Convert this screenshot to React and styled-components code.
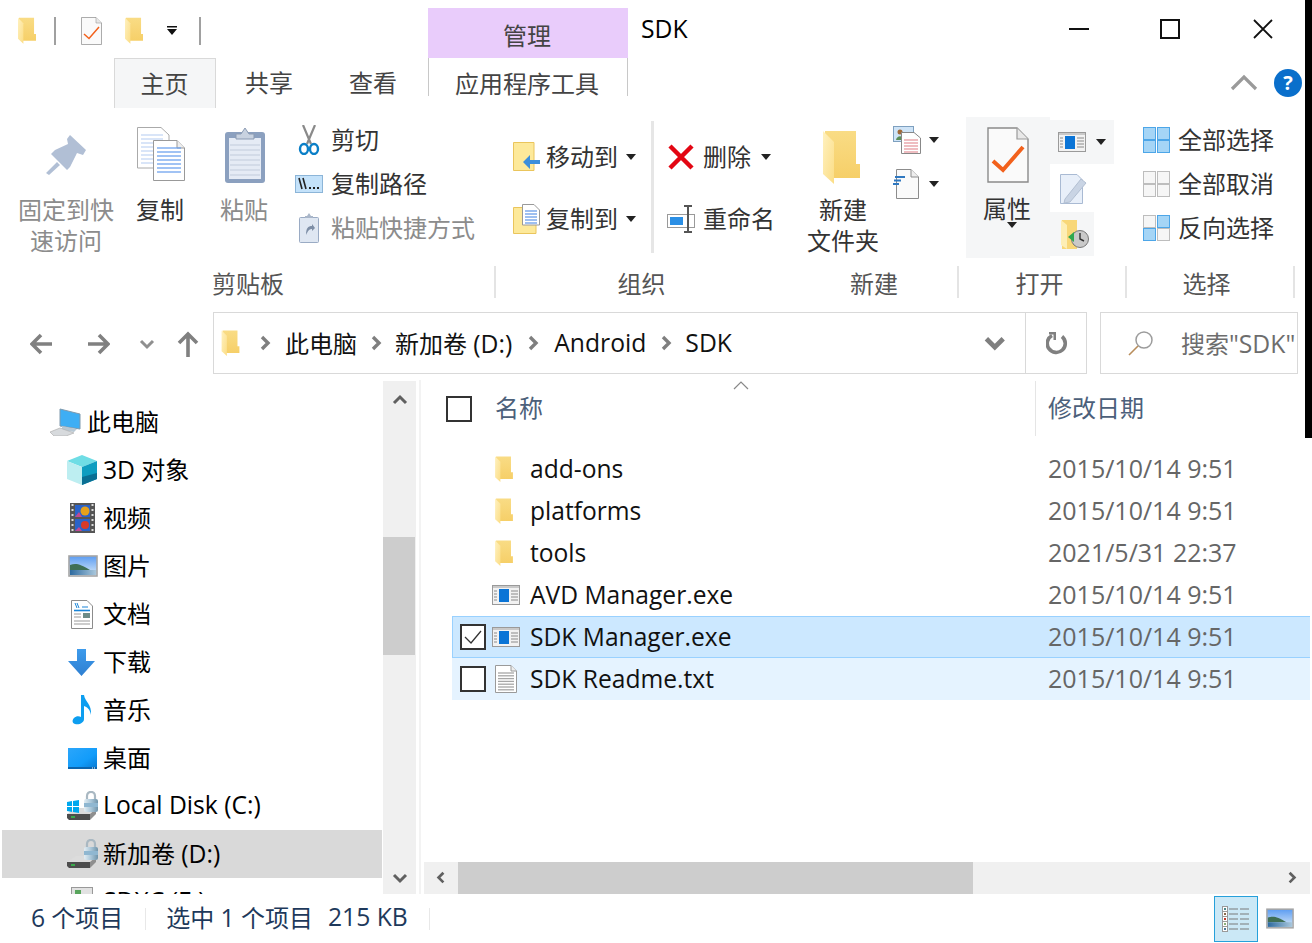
import React from "react";
import styled, { createGlobalStyle, css } from "styled-components";

const Global = createGlobalStyle`
  html, body { margin: 0; padding: 0; background: #fff; }
  body { font-family: "Open Sans", "Noto Sans CJK SC", sans-serif; font-size: 24px; color: #111; }
  * { box-sizing: border-box; }
  svg { display: block; flex: none; }
`;

/* text helpers */
const L = styled.span`font-size: 24.7px;`;
const Label = styled.span`margin-bottom: ${p => p.$lift ?? 4}px;`;

/* ---------- window frame ---------- */
const Window = styled.div`
  position: relative; width: 1312px; height: 943px; overflow: hidden; background: #fff;
  display: flex; flex-direction: column;
`;
const EdgeStrip = styled.div`
  position: absolute; top: 0; right: 0; width: 7px; height: 438px; background: #000;
`;
const TitleBar = styled.div`display: flex; height: 58px;`;
const Qat = styled.div`
  width: 428px; display: flex; align-items: center; padding: 3px 0 0 18px;
`;
const QatSep = styled.div`width: 2px; height: 28px; background: #a0a0a0; margin-left: ${p => p.$ml}px;`;
const QatSlot = styled.div`margin-left: ${p => p.$ml}px;`;
const ContextHead = styled.div`
  width: 200px; margin-top: 8px; background: #e9ccfb; color: #444;
  display: flex; align-items: center; justify-content: center; padding: 2px 2px 0 0;
`;
const Title = styled.div`padding: 0 0 0 13px; line-height: 57px; color: #000;`;
const WinControls = styled.div`margin-left: auto; display: flex; padding-right: 2px;`;
const WinButton = styled.div`width: ${p => p.$w}px; display: flex; align-items: center; justify-content: center;`;

/* ---------- tabs ---------- */
const TabRow = styled.div`display: flex; height: 50px; align-items: flex-start;`;
const Tab = styled.div`
  width: ${p => p.$w}px; margin-left: ${p => p.$ml || 0}px; height: ${p => p.$h || 50}px;
  line-height: ${p => p.$lh || 50}px; text-align: center; color: #444;
  ${p => p.$active && css`
    background: #f5f6f7; border: 1px solid #d9d9d9; border-bottom: none; line-height: 49px; padding-right: 1px;
  `}
  ${p => p.$ctx && css`border-left: 1px solid #c8c8c8; border-right: 1px solid #c8c8c8; padding-right: 2px;`}
`;
const TabRight = styled.div`
  margin-left: auto; display: flex; align-items: center; height: 50px; gap: 16px; padding-right: 10px;
`;
const Help = styled.div`
  width: 28px; height: 28px; border-radius: 50%; background: #0a6fcb; color: #fff;
  font-size: 20px; font-weight: 700; line-height: 28px; text-align: center;
`;

/* ---------- ribbon ---------- */
const Ribbon = styled.div`display: flex; height: 204px;`;
const Group = styled.div`
  width: ${p => p.$w}px; flex: none; display: flex; flex-direction: column;
`;
const GroupBody = styled.div`height: 148px; margin-top: 10px; display: flex; padding-left: ${p => p.$pl || 0}px;`;
const GroupLabelRow = styled.div`
  height: 32px; display: flex; align-items: center; justify-content: center; color: #555;
  padding: 0 ${p => p.$pr || 0}px 0 ${p => p.$pl || 0}px;
  border-right: ${p => (p.$sep ? "2px solid #e4e4e4" : "none")};
`;
const BigButton = styled.div`
  width: ${p => p.$w}px; margin-left: ${p => p.$ml || 0}px; flex: none; display: flex; flex-direction: column;
  align-items: center; color: ${p => (p.$off ? "#8c8c8c" : "#333")}; line-height: 31px; text-align: center;
`;
const BigIcon = styled.div`
  height: 76px; padding-top: ${p => p.$pt}px; margin-right: ${p => p.$mr || 0}px; margin-left: ${p => p.$ml || 0}px;
`;
const BigArrow = styled.div`margin: -2px 0 0 8px;`;
const SmallColumn = styled.div`
  display: flex; flex-direction: column; margin-left: ${p => p.$ml || 0}px; width: ${p => (p.$w ? p.$w + "px" : "auto")};
  padding-top: ${p => p.$pt || 0}px;
`;
const SmallRow = styled.div`
  height: ${p => p.$h || 44}px; display: flex; align-items: center; white-space: nowrap;
  color: ${p => (p.$off ? "#8c8c8c" : "#333")};
`;
const SmallIconSlot = styled.div`
  width: ${p => p.$w}px; flex: none; display: flex; padding-left: ${p => p.$pl || 0}px; margin-left: ${p => p.$ml || 0}px;
`;
const DropArrow = styled.div`
  margin-left: ${p => p.$ml}px; width: 0; height: 0;
  border-left: 5px solid transparent; border-right: 5px solid transparent; border-top: 6px solid #222;
`;
const RibbonSep = styled.div`width: 3px; height: 132px; margin-top: 3px; background: #e6e6e6; flex: none;`;
const OpenPanel = styled.div`
  width: 84px; height: 141px; margin: -1px 0 0 7px; background: #f5f6f7; display: flex; flex-direction: column;
  align-items: center; color: #333; line-height: 31px; flex: none;
`;
const OpenLabel = styled.span`margin-right: 2px;`;
const OpenRow = styled.div`
  width: ${p => p.$w}px; height: ${p => p.$h}px; margin-top: ${p => p.$mt || 0}px;
  background: ${p => (p.$bg ? "#f5f6f7" : "transparent")}; display: flex; align-items: center; padding-left: ${p => p.$pl}px;
`;

/* ---------- navigation bar ---------- */
const NavBar = styled.div`display: flex; height: 62px; align-items: stretch;`;
const NavButtons = styled.div`width: 213px; flex: none; display: flex; align-items: center; padding: 2px 0 0 30px;`;
const NavSlot = styled.div`margin-left: ${p => p.$ml || 0}px;`;
const Address = styled.div`
  width: 874px; border: 1px solid #d9d9d9; display: flex; align-items: center; padding-left: 7px; flex: none;
`;
const CrumbSep = styled.div`width: ${p => p.$w}px; flex: none; display: flex; justify-content: center; padding-left: ${p => p.$pl || 0}px;`;
const CrumbText = styled.span`color: #111; white-space: nowrap; margin-bottom: 2px;`;
const AddressEnd = styled.div`margin-left: auto; display: flex; height: 100%; align-items: center;`;
const AddressDrop = styled.div`width: 60px; display: flex; justify-content: center;`;
const Refresh = styled.div`
  width: 61px; height: 100%; border-left: 1px solid #d9d9d9; display: flex; align-items: center; justify-content: center; padding-left: 1px;
`;
const Search = styled.div`
  width: 198px; margin-left: 13px; border: 1px solid #d9d9d9; display: flex; align-items: center;
  padding-left: 27px; color: #6d6d6d; white-space: nowrap; overflow: hidden; flex: none;
`;
const SearchText = styled.span`margin: 0 0 2px 27px;`;

/* ---------- body ---------- */
const Content = styled.div`display: flex; height: 520px;`;
const NavPane = styled.div`display: flex; width: 424px; flex: none; padding-top: 6px;`;
const Tree = styled.div`
  width: 383px; height: 514px; padding: 18px 1px 0 2px; overflow: hidden; flex: none;
`;
const TreeRow = styled.div`
  height: 48px; display: flex; align-items: center; white-space: nowrap; color: #000;
  padding-left: ${p => p.$pl}px; background: ${p => (p.$sel ? "#d9d9d9" : "transparent")};
`;
const TreeIcon = styled.div`width: ${p => p.$w || 36}px; flex: none; display: flex;`;
const VScroll = styled.div`
  width: 33px; height: 513px; margin-top: 1px; background: #f0f0f0; display: flex; flex-direction: column; flex: none;
`;
const ScrollArrow = styled.div`
  height: ${p => p.$h || 38}px; width: ${p => p.$w || "auto"}; display: flex; align-items: center; justify-content: center; flex: none;
`;
const VGap = styled.div`height: 118px; flex: none;`;
const VThumb = styled.div`height: 118px; width: 32px; background: #cdcdcd; flex: none;`;
const Flex1 = styled.div`flex: 1;`;
const PaneDivider = styled.div`width: 2px; height: 514px; margin-left: 3px; background: #f3f3f3; flex: none;`;

const ListPane = styled.div`flex: 1; display: flex; flex-direction: column; position: relative;`;
const ListHeader = styled.div`height: 62px; display: flex; flex: none; padding: 7px 0 0 0; position: relative;`;
const HeaderCheckSlot = styled.div`margin: 15px 0 0 22px; flex: none;`;
const HeaderName = styled.div`
  width: 541px; margin-left: 23px; height: 55px; line-height: 54px; color: #4c607a; border-right: 1px solid #e5e5e5; flex: none;
`;
const HeaderDate = styled.div`margin-left: 12px; line-height: 54px; color: #4c607a;`;
const SortCaret = styled.div`position: absolute; left: 309px; top: 7px;`;
const Rows = styled.div`flex: 1; padding: 12px 2px 0 28px; overflow: hidden;`;
const Row = styled.div`
  height: 42px; display: grid; grid-template-columns: 40px 38px 518px 1fr; align-items: center; white-space: nowrap;
  ${p => p.$sel && css`
    background: #cce8ff;
    box-shadow: inset 1px 0 0 #99d1ff, inset 0 1px 0 #99d1ff, inset 0 -1px 0 #99d1ff;
  `}
  ${p => p.$hot && css`background: #e5f3ff;`}
`;
const RowCheck = styled.div`padding-left: 8px;`;
const CheckBox = styled.div`
  width: 26px; height: 26px; border: 2px solid #333; background: #fff;
  display: flex; align-items: center; justify-content: center;
`;
const RowIcon = styled.div`display: flex; padding-left: ${p => p.$pl || 0}px;`;
const RowName = styled.div`color: #111; font-size: 24.6px; margin-bottom: 2px;`;
const RowDate = styled.div`color: #666; font-size: 25px; margin-bottom: 2px;`;
const HScroll = styled.div`
  height: 32px; margin-right: 2px; background: #f0f0f0; display: flex; flex: none;
`;
const HThumb = styled.div`width: 515px; background: #cdcdcd; flex: none;`;

/* ---------- status bar ---------- */
const StatusBar = styled.div`
  height: 49px; display: flex; align-items: center; padding-left: 31px; color: #1e395b; white-space: nowrap;
`;
const StatusSep = styled.div`width: 1px; height: 22px; background: #e8e8e8; margin: 0 ${p => p.$r}px 0 ${p => p.$l}px;`;
const StatusGap = styled(Label)`margin-left: 15px;`;
const ViewButtons = styled.div`margin-left: auto; display: flex; align-items: center; padding-right: 18px; height: 100%;`;
const ViewActive = styled.div`
  width: 44px; height: 46px; border: 1px solid #26a0da; background: #cbe8f6; display: flex; align-items: center; justify-content: center;
`;
const ViewOther = styled.div`margin-left: 8px;`;

/* ---------- icons ---------- */
const Folder = ({ w = 18, h = 26 }) => (
  <svg width={w} height={h} viewBox="0 0 37 54">
    <defs>
      <linearGradient id="fBack" x1="0" y1="0" x2="0" y2="1">
        <stop offset="0" stopColor="#f9dc85" /><stop offset="1" stopColor="#f6cf68" />
      </linearGradient>
      <linearGradient id="fFront" x1="0" y1="0" x2="1" y2="1">
        <stop offset="0" stopColor="#fff1bf" /><stop offset="1" stopColor="#fbdd86" />
      </linearGradient>
    </defs>
    <path d="M2 1 H33 V34 H37 V48 H10 L2 40 Z" fill="url(#fBack)" />
    <path d="M0 1 L11 12 V54 L0 44 Z" fill="url(#fFront)" />
  </svg>
);
const CheckDoc = ({ w = 42, h = 56, sw = 4 }) => (
  <svg width={w} height={h} viewBox="0 0 42 56">
    <path d="M1 1 H30 L41 12 V55 H1 Z" fill="#fafafa" stroke="#8a8a8a" strokeWidth="1.4" />
    <path d="M30 1 V12 H41" fill="#e8e8e8" stroke="#9a9a9a" strokeWidth="1.2" />
    <path d="M6 34 L16 43 L36 20" fill="none" stroke="#f2611c" strokeWidth={sw} />
  </svg>
);
const Pin = () => (
  <svg width="40" height="40" viewBox="0 0 40 40">
    <path d="M24 0 L40 15 L37 20 L31 18 L24 32 L21 35 L5 19 L9 15 L22 9 L21 4 Z M11 27 L14 30 L3 40 L0 38 Z" fill="#b1bfd5" />
  </svg>
);
const DocLines = ({ x, y, w, n, c, step = 4 }) => (
  <g stroke={c} strokeWidth="1.3">
    {Array.from({ length: n }, (_, i) => <line key={i} x1={x} x2={x + w} y1={y + i * step} y2={y + i * step} />)}
  </g>
);
const CopyIcon = () => (
  <svg width="48" height="54" viewBox="0 0 48 54">
    <path d="M.5.5 H24 L32 8 V41 H.5 Z" fill="#fff" stroke="#aaa" />
    <DocLines x={4} y={8} w={22} n={8} c="#c5d7f5" />
    <path d="M16.5 13.5 H40 L47.5 21 V53.5 H16.5 Z" fill="#fff" stroke="#999" />
    <path d="M40 13.5 V21 H47.5" fill="#eee" stroke="#999" />
    <DocLines x={20} y={21} w={24} n={7} c="#6fa3ee" />
  </svg>
);
const PasteIcon = () => (
  <svg width="40" height="56" viewBox="0 0 40 56">
    <rect x="0" y="5" width="40" height="51" rx="3" fill="#8ba0bf" />
    <rect x="4" y="11" width="32" height="41" fill="#e5ebf5" />
    <DocLines x={5} y={18} w={30} n={7} c="#c9d2e0" step={5} />
    <path d="M11 12 V7 H16 L20 1 L24 7 H29 V12 Z" fill="#c8d2e0" stroke="#8b9bb3" />
  </svg>
);
const Scissors = () => (
  <svg width="22" height="30" viewBox="0 0 22 30">
    <path d="M5 0 L13 19 M17 0 L9 19" stroke="#8a8a8a" strokeWidth="2.2" fill="none" />
    <ellipse cx="6" cy="24" rx="4" ry="5" fill="none" stroke="#0b7fc7" strokeWidth="2.4" />
    <ellipse cx="16" cy="24" rx="4" ry="5" fill="none" stroke="#0b7fc7" strokeWidth="2.4" />
  </svg>
);
const PathIcon = () => (
  <svg width="28" height="18" viewBox="0 0 28 18">
    <rect x=".5" y=".5" width="27" height="17" fill="#c4e2fa" stroke="#8cb5d8" />
    <path d="M4 3 L7 14 M8 3 L11 14" stroke="#222" strokeWidth="1.6" />
    <path d="M14 13 h2 M18 13 h2 M22 13 h2" stroke="#222" strokeWidth="1.8" />
  </svg>
);
const ShortcutIcon = () => (
  <svg width="20" height="30" viewBox="0 0 20 30">
    <rect x=".5" y="4.5" width="19" height="25" rx="1" fill="#dfe7f2" stroke="#9aabc4" />
    <path d="M6 5 V3 H8 L10 0 L12 3 H14 V5 Z" fill="#a9b6c9" />
    <path d="M7 22 C7 15 9 13 13 13 V11 L16 15 L13 18 V16 C10 16 9 18 7 22 Z" fill="#7d8ea6" />
  </svg>
);
const MoveIcon = () => (
  <svg width="28" height="30" viewBox="0 0 28 30">
    <path d="M.5.5 H21 V28.5 H.5 Z" fill="#fde99a" stroke="#eac55c" />
    <path d="M27 18 H17 V13 L10 20 L17 27 V22 H27 Z" fill="#3d8fdc" />
  </svg>
);
const CopyToIcon = () => (
  <svg width="28" height="30" viewBox="0 0 28 30">
    <path d="M.5 3.5 H23 V29.5 H.5 Z" fill="#fde99a" stroke="#eac55c" />
    <path d="M9.5 .5 H21 L26.5 6 V21 H9.5 Z" fill="#fff" stroke="#999" />
    <DocLines x={12} y={7} w={12} n={5} c="#6a9ce8" step={3} />
  </svg>
);
const DeleteIcon = () => (
  <svg width="26" height="26" viewBox="0 0 26 26">
    <path d="M2 2 L24 24 M24 2 L2 24" stroke="#e30613" strokeWidth="4.5" />
  </svg>
);
const RenameIcon = () => (
  <svg width="28" height="28" viewBox="0 0 28 28">
    <rect x=".5" y="9.5" width="27" height="13" fill="#fff" stroke="#9a9a9a" />
    <rect x="3" y="12" width="13" height="8" fill="#2b8fe5" />
    <path d="M17 1 H25 M17 27 H25 M21 1 V27" stroke="#555" strokeWidth="2" />
  </svg>
);
const NewItemIcon = () => (
  <svg width="28" height="28" viewBox="0 0 28 28">
    <rect x=".5" y=".5" width="20" height="15" fill="#cfe4f7" stroke="#7ea0bf" />
    <circle cx="7" cy="6" r="2.5" fill="#a06a3a" />
    <path d="M3 14 C4 9 10 9 11 14" fill="#5b8f58" />
    <path d="M8.5 6.5 H21 L27.5 12 V27.5 H8.5 Z" fill="#fff" stroke="#888" />
    <DocLines x={11} y={14} w={14} n={5} c="#e79aa0" step={3} />
  </svg>
);
const EasyIcon = () => (
  <svg width="26" height="30" viewBox="0 0 26 30">
    <path d="M3.5 .5 H18 L25.5 8 V29.5 H3.5 Z" fill="#fafafa" stroke="#8c8c8c" />
    <path d="M18 .5 V8 H25.5" fill="#eee" stroke="#8c8c8c" />
    <path d="M2 8 h10 M1 11.5 h7 M0 15 h6" stroke="#2f78c0" strokeWidth="2" />
  </svg>
);
const AppWindow = ({ w = 28, h = 20 }) => (
  <svg width={w} height={h} viewBox="0 0 28 20">
    <rect x=".5" y=".5" width="27" height="19" fill="#f2f2f2" stroke="#9a9a9a" />
    <rect x="1" y="1" width="26" height="2" fill="#c9c9c9" />
    <rect x="7" y="4" width="10" height="13" fill="#0a74d6" />
    <path d="M2 6 h3 M2 9 h3 M2 12 h3 M2 15 h3 M19 6 h7 M19 9 h7 M19 12 h7 M19 15 h7" stroke="#8a8a8a" />
  </svg>
);
const EditIcon = () => (
  <svg width="28" height="30" viewBox="0 0 28 30">
    <path d="M.5 .5 H17 L22.5 6 V29.5 H.5 Z" fill="#e8eff9" stroke="#a9bad3" />
    <path d="M5 25 L21 5 L26 9 L10 28 L4 29 Z" fill="#c9d4e4" stroke="#b2bfd2" />
  </svg>
);
const HistoryIcon = () => (
  <svg width="28" height="30" viewBox="0 0 28 30">
    <path d="M1 1 H16 V30 H1 Z" fill="#f8d778" />
    <path d="M0 1 L6 6 V30 L0 26 Z" fill="#fdeeb5" />
    <circle cx="19" cy="20" r="8.5" fill="#c9c9c9" stroke="#777" />
    <path d="M19 14 V20 L23 22" stroke="#333" fill="none" strokeWidth="1.4" />
    <path d="M7 18 L13 13 V23 Z" fill="#2fa84f" />
  </svg>
);
const SelectGrid = ({ on = [0, 1, 2, 3] }) => (
  <svg width="27" height="26" viewBox="0 0 27 26">
    {[[0, 0], [14, 0], [0, 13], [14, 13]].map(([x, y], i) => (
      <rect key={i} x={x + .5} y={y + .5} width="12" height="12"
        fill={on.includes(i) ? "#a5d5f6" : "#f6f6f6"} stroke={on.includes(i) ? "#4da6e8" : "#bdbdbd"} />
    ))}
  </svg>
);
const ChevronSvg = styled.svg`overflow: visible;`;
const Chevron = ({ dir = "right", s = 10, c = "#7f7f7f", sw = 3 }) => {
  const d = { right: "M2 1 L8 7 L2 13", left: "M8 1 L2 7 L8 13", up: "M1 8 L7 2 L13 8", down: "M1 2 L7 8 L13 2" }[dir];
  const side = dir === "right" || dir === "left";
  return (
    <ChevronSvg width={side ? s : s * 1.4} height={side ? s * 1.4 : s} viewBox={side ? "0 0 10 14" : "0 0 14 10"}>
      <path d={d} fill="none" stroke={c} strokeWidth={sw} />
    </ChevronSvg>
  );
};
const Arrow = ({ dir }) => {
  const d = {
    left: "M22 11 H3 M11 2 L2 11 L11 20",
    right: "M0 11 H19 M11 2 L20 11 L11 20",
    up: "M11 26 V3 M2 12 L11 3 L20 12",
  }[dir];
  return (
    <svg width="22" height={dir === "up" ? 26 : 22} viewBox={dir === "up" ? "0 0 22 26" : "0 0 22 22"}>
      <path d={d} fill="none" stroke="#808080" strokeWidth="3.6" />
    </svg>
  );
};
const RefreshIcon = () => (
  <svg width="22" height="24" viewBox="0 0 22 24">
    <path d="M6 4.5 A9 9 0 1 0 16 5.5" fill="none" stroke="#808080" strokeWidth="3.6" />
    <path d="M3 1 L10 1 L10 9 L7.5 9 L7.5 3.5 L3 3.5 Z" fill="#808080" />
  </svg>
);
const Magnifier = () => (
  <svg width="26" height="26" viewBox="0 0 26 26">
    <circle cx="16" cy="10" r="8" fill="none" stroke="#9c9c9c" strokeWidth="1.5" />
    <path d="M10 16 L1 25" stroke="#b98d5b" strokeWidth="1.6" />
  </svg>
);
const PcIcon = () => (
  <svg width="31" height="28" viewBox="0 0 31 28">
    <path d="M10 1 L30 6 V21 L10 18 Z" fill="#3eaef4" stroke="#7e99ad" />
    <path d="M12 18 L27 21 L24 24 L12 22 Z" fill="#b7c7d3" />
    <path d="M0 24 L10 20 L24 25 L16 28 H4 Z" fill="#d7dadd" stroke="#b0b0b0" strokeWidth=".7" />
  </svg>
);
const CubeIcon = () => (
  <svg width="30" height="30" viewBox="0 0 30 30">
    <path d="M15 0 L30 6 L15 12 L0 6 Z" fill="#6fdde5" />
    <path d="M0 6 L15 12 V30 L0 24 Z" fill="#bdeef1" />
    <path d="M15 12 L30 6 V24 L15 30 Z" fill="#0e9dc0" />
    <path d="M15 22 L30 18 V24 L15 30 Z" fill="#0a6f93" />
  </svg>
);
const VideoIcon = () => (
  <svg width="25" height="30" viewBox="0 0 25 30">
    <rect width="25" height="30" fill="#555" />
    <path d="M1.5 2 h2 M1.5 7 h2 M1.5 12 h2 M1.5 17 h2 M1.5 22 h2 M1.5 27 h2 M21.5 2 h2 M21.5 7 h2 M21.5 12 h2 M21.5 17 h2 M21.5 22 h2 M21.5 27 h2" stroke="#ddd" strokeWidth="2" />
    <rect x="5" y="2" width="15" height="12" fill="#2a63c9" />
    <rect x="5" y="16" width="15" height="12" fill="#2a63c9" />
    <circle cx="15" cy="8" r="4.5" fill="#e6a11b" />
    <circle cx="15" cy="22" r="4" fill="#d83a2a" />
    <path d="M5 14 L9 9 L12 14 Z M5 28 L9 24 L12 28 Z" fill="#c04a94" />
  </svg>
);
const PictureIcon = ({ w = 30, h = 22 }) => (
  <svg width={w} height={h} viewBox="0 0 30 22">
    <defs>
      <linearGradient id="sky" x1="0" y1="0" x2="0" y2="1">
        <stop offset="0" stopColor="#5b9cf2" /><stop offset="1" stopColor="#dcebf7" />
      </linearGradient>
      <linearGradient id="sea" x1="0" y1="0" x2="1" y2="0">
        <stop offset="0" stopColor="#2d6a9f" /><stop offset="1" stopColor="#a9c7dc" />
      </linearGradient>
    </defs>
    <rect x="1" y="1" width="28" height="20" fill="url(#sky)" stroke="#a5a5a5" strokeWidth="1.6" />
    <path d="M2 10 C8 8 12 9 22 15 L2 15 Z" fill="#3f6f55" />
    <rect x="2" y="15" width="26" height="5" fill="url(#sea)" />
  </svg>
);
const DocIcon = () => (
  <svg width="22" height="29" viewBox="0 0 22 29">
    <path d="M.5 .5 H16 L21.5 6 V28.5 H.5 Z" fill="#fff" stroke="#8c8c8c" />
    <path d="M3 10.5 h16" stroke="#1a85d8" strokeWidth="1.6" />
    <path d="M4 3 L6 8 M6 3 L8 8 M11 7 h6" stroke="#1a85d8" />
    <rect x="12" y="13" width="7" height="5" fill="#6d8c88" />
    <path d="M3 14 h7 M3 17 h7 M3 21 h16 M3 24 h16" stroke="#999" />
  </svg>
);
const DownloadIcon = () => (
  <svg width="27" height="27" viewBox="0 0 27 27">
    <defs><linearGradient id="dl" x1="0" y1="0" x2="0" y2="1"><stop offset="0" stopColor="#3d9bec" /><stop offset="1" stopColor="#2e7fd1" /></linearGradient></defs>
    <path d="M9 0 H18 V12 H27 L13.5 27 L0 12 H9 Z" fill="url(#dl)" />
  </svg>
);
const MusicIcon = () => (
  <svg width="20" height="30" viewBox="0 0 20 30">
    <path d="M9 0 H12 C13 7 20 9 19 20 C18 14 15 12 12 11 V24 C12 28 7 30 3 29 C0 28 0 25 2 23 C4 21 7 21 9 22 Z" fill="#0d9ef0" />
  </svg>
);
const DesktopIcon = () => (
  <svg width="29" height="21" viewBox="0 0 29 21">
    <defs><linearGradient id="dt" x1="0" y1="0" x2="1" y2="1"><stop offset="0" stopColor="#2ba6fb" /><stop offset=".6" stopColor="#129cfa" /><stop offset="1" stopColor="#0878d0" /></linearGradient></defs>
    <rect width="29" height="21" fill="url(#dt)" />
    <rect y="19" width="29" height="2" fill="#0b64ad" />
    <path d="M24 20 h4" stroke="#fff" strokeDasharray="1 1" />
  </svg>
);
const DiskIcon = ({ win }) => (
  <svg width="31" height="30" viewBox="0 0 31 30">
    <defs>
      <linearGradient id="lk" x1="0" y1="0" x2="1" y2="0">
        <stop offset="0" stopColor="#e3edf3" /><stop offset=".5" stopColor="#a9c6d8" /><stop offset="1" stopColor="#6f93a9" />
      </linearGradient>
    </defs>
    <path d="M0 23 L9 17 H29 V22 L23 28 H2 Z" fill="#dcdcdc" />
    <path d="M0 23 H23 V29 H2 L0 27 Z" fill="#4d4d4d" />
    <path d="M23 23 L29 18 V23 L23 29 Z" fill="#8f8f8f" />
    <path d="M4 26 h4" stroke="#36c24d" strokeWidth="1.6" />
    <path d="M20 9 V5 C20 -.5 28 -.5 28 5 V9" fill="none" stroke="#a9b8c2" strokeWidth="2.2" />
    <rect x="17" y="8" width="14" height="13" rx="2" fill="url(#lk)" />
    <rect x="17" y="12" width="14" height="4" fill="#8fb7d1" />
    {win && <path d="M0 11 L5 10 V15 H0 Z M6 10 L12 9 V15 H6 Z M0 16 H5 V21 L0 20 Z M6 16 H12 V22 L6 21 Z" fill="#00a8ee" />}
  </svg>
);
const SdIcon = () => (
  <svg width="22" height="30" viewBox="0 0 22 30">
    <rect x=".5" y=".5" width="21" height="29" fill="#e2e2e2" stroke="#999" />
    <rect x="4" y="3" width="6" height="4" fill="#58a55c" />
  </svg>
);
const TxtIcon = () => (
  <svg width="22" height="28" viewBox="0 0 22 28">
    <path d="M.5 .5 H16 L21.5 6 V27.5 H.5 Z" fill="#fff" stroke="#9a9a9a" />
    <path d="M16 .5 V6 H21.5" fill="#eee" stroke="#9a9a9a" />
    <DocLines x={3} y={8} w={16} n={7} c="#a6a6a6" step={2.8} />
  </svg>
);
const DetailsIcon = () => (
  <svg width="28" height="26" viewBox="0 0 28 26">
    <rect x=".5" y=".5" width="5" height="25" fill="#fff" stroke="#9a9a9a" />
    <path d="M1 5.5 h5 M1 10.5 h5 M1 15.5 h5 M1 20.5 h5" stroke="#9a9a9a" />
    <rect x="2" y="2" width="2" height="2" fill="#4b8a8c" /><rect x="2" y="7" width="2" height="2" fill="#8a6a4b" />
    <rect x="2" y="12" width="2" height="2" fill="#c0392b" /><rect x="2" y="17" width="2" height="2" fill="#8ab07a" />
    <rect x="2" y="22" width="2" height="2" fill="#4b7a9c" />
    <path d="M7 3 h9 M18 3 h9 M7 8 h9 M18 8 h9 M7 13 h9 M18 13 h9 M7 18 h9 M18 18 h9 M7 23 h9 M18 23 h9" stroke="#7a7a7a" strokeWidth="1.2" />
  </svg>
);

const tree = [
  { id: "pc", t: "此电脑", pl: 48, icon: <PcIcon />, w: 37 },
  { id: "3d", t: <><L>3D</L> 对象</>, pl: 65, icon: <CubeIcon /> },
  { id: "v", t: "视频", pl: 68, icon: <VideoIcon />, w: 33 },
  { id: "p", t: "图片", pl: 66, icon: <PictureIcon />, w: 35 },
  { id: "d", t: "文档", pl: 69, icon: <DocIcon />, w: 32 },
  { id: "dl", t: "下载", pl: 66, icon: <DownloadIcon />, w: 35 },
  { id: "m", t: "音乐", pl: 70, icon: <MusicIcon />, w: 31 },
  { id: "ds", t: "桌面", pl: 66, icon: <DesktopIcon />, w: 35 },
  { id: "c", t: <L>Local Disk (C:)</L>, pl: 65, icon: <DiskIcon win /> },
  { id: "dd", t: <>新加卷 <L>(D:)</L></>, pl: 65, icon: <DiskIcon />, sel: true },
  { id: "e", t: <L>SDXC (E:)</L>, pl: 69, icon: <SdIcon />, w: 32 },
];
const files = [
  { n: "add-ons", d: "2015/10/14 9:51", k: "f" },
  { n: "platforms", d: "2015/10/14 9:51", k: "f" },
  { n: "tools", d: "2021/5/31 22:37", k: "f" },
  { n: "AVD Manager.exe", d: "2015/10/14 9:51", k: "e" },
  { n: "SDK Manager.exe", d: "2015/10/14 9:51", k: "e", sel: true },
  { n: "SDK Readme.txt", d: "2015/10/14 9:51", k: "t", hot: true },
];
const fileIcon = { f: <RowIcon $pl={3}><Folder /></RowIcon>, e: <RowIcon><AppWindow /></RowIcon>, t: <RowIcon $pl={3}><TxtIcon /></RowIcon> };

export default function App() {
  return (
    <Window>
      <Global />
      <TitleBar>
        <Qat>
          <Folder w={18} h={27} />
          <QatSep $ml={18} />
          <QatSlot $ml={25}><CheckDoc w={21} h={28} sw={3} /></QatSlot>
          <QatSlot $ml={23}><Folder w={18} h={27} /></QatSlot>
          <QatSlot $ml={24}>
            <svg width="10" height="9" viewBox="0 0 10 9"><path d="M0 0 h10 v1.5 h-10 Z M0 3 h10 L5 9 Z" fill="#111" /></svg>
          </QatSlot>
          <QatSep $ml={22} />
        </Qat>
        <ContextHead>管理</ContextHead>
        <Title><L>SDK</L></Title>
        <WinControls>
          <WinButton $w={92}><svg width="20" height="2"><rect width="20" height="2" fill="#111" /></svg></WinButton>
          <WinButton $w={90}><svg width="20" height="20"><rect x="1" y="1" width="18" height="18" fill="none" stroke="#111" strokeWidth="2" /></svg></WinButton>
          <WinButton $w={95}><svg width="20" height="20" viewBox="0 0 20 20"><path d="M1 1 L19 19 M19 1 L1 19" stroke="#111" strokeWidth="1.8" /></svg></WinButton>
        </WinControls>
      </TitleBar>

      <TabRow>
        <Tab $w={102} $ml={114} $active>主页</Tab>
        <Tab $w={106}>共享</Tab>
        <Tab $w={102}>查看</Tab>
        <Tab $w={200} $ml={4} $h={38} $lh={52} $ctx>应用程序工具</Tab>
        <TabRight>
          <Chevron dir="up" s={20} c="#9a9a9a" sw={1.6} />
          <Help>?</Help>
        </TabRight>
      </TabRow>

      <Ribbon>
        <Group $w={496}>
          <GroupBody $pl={18}>
            <BigButton $w={96} $off><BigIcon $pt={17}><Pin /></BigIcon>固定到快<br />速访问</BigButton>
            <BigButton $w={92}><BigIcon $pt={9} $ml={2}><CopyIcon /></BigIcon>复制</BigButton>
            <BigButton $w={76} $off><BigIcon $pt={9} $ml={2}><PasteIcon /></BigIcon>粘贴</BigButton>
            <SmallColumn $ml={16}>
              <SmallRow><SmallIconSlot $w={33}><Scissors /></SmallIconSlot><Label>剪切</Label></SmallRow>
              <SmallRow><SmallIconSlot $w={36} $ml={-3}><PathIcon /></SmallIconSlot><Label>复制路径</Label></SmallRow>
              <SmallRow $off><SmallIconSlot $w={33} $pl={1}><ShortcutIcon /></SmallIconSlot><Label>粘贴快捷方式</Label></SmallRow>
            </SmallColumn>
          </GroupBody>
          <GroupLabelRow $sep $pl={2}>剪贴板</GroupLabelRow>
        </Group>
        <Group $w={293}>
          <GroupBody $pl={17}>
            <SmallColumn $w={138} $pt={8}>
              <SmallRow $h={62}><SmallIconSlot $w={33}><MoveIcon /></SmallIconSlot><Label>移动到</Label><DropArrow $ml={8} /></SmallRow>
              <SmallRow $h={62}><SmallIconSlot $w={33}><CopyToIcon /></SmallIconSlot><Label>复制到</Label><DropArrow $ml={8} /></SmallRow>
            </SmallColumn>
            <RibbonSep />
            <SmallColumn $ml={13} $pt={8}>
              <SmallRow $h={62}><SmallIconSlot $w={36} $pl={1}><DeleteIcon /></SmallIconSlot><Label>删除</Label><DropArrow $ml={10} /></SmallRow>
              <SmallRow $h={62}><SmallIconSlot $w={36}><RenameIcon /></SmallIconSlot><Label>重命名</Label></SmallRow>
            </SmallColumn>
          </GroupBody>
          <GroupLabelRow $pr={2}>组织</GroupLabelRow>
        </Group>
        <Group $w={170}>
          <GroupBody>
            <BigButton $w={100} $ml={4}><BigIcon $pt={12} $mr={4}><Folder w={37} h={54} /></BigIcon>新建<br />文件夹</BigButton>
            <SmallColumn>
              <SmallRow><SmallIconSlot $w={36}><NewItemIcon /></SmallIconSlot><DropArrow $ml={0} /></SmallRow>
              <SmallRow><SmallIconSlot $w={36}><EasyIcon /></SmallIconSlot><DropArrow $ml={0} /></SmallRow>
            </SmallColumn>
          </GroupBody>
          <GroupLabelRow $sep $pl={2}>新建</GroupLabelRow>
        </Group>
        <Group $w={168}>
          <GroupBody>
            <OpenPanel>
              <BigIcon $pt={10}><CheckDoc /></BigIcon>
              <OpenLabel>属性</OpenLabel>
              <BigArrow><DropArrow $ml={0} /></BigArrow>
            </OpenPanel>
            <SmallColumn $pt={2}>
              <OpenRow $w={64} $h={44} $pl={8} $bg><AppWindow /><DropArrow $ml={10} /></OpenRow>
              <OpenRow $w={64} $h={46} $mt={2} $pl={10}><EditIcon /></OpenRow>
              <OpenRow $w={44} $h={44} $pl={11} $bg><HistoryIcon /></OpenRow>
            </SmallColumn>
          </GroupBody>
          <GroupLabelRow $sep $pr={5}>打开</GroupLabelRow>
        </Group>
        <Group $w={168}>
          <GroupBody $pl={16}>
            <SmallColumn>
              <SmallRow><SmallIconSlot $w={35}><SelectGrid /></SmallIconSlot><Label>全部选择</Label></SmallRow>
              <SmallRow><SmallIconSlot $w={35}><SelectGrid on={[]} /></SmallIconSlot><Label>全部取消</Label></SmallRow>
              <SmallRow><SmallIconSlot $w={35}><SelectGrid on={[1, 2]} /></SmallIconSlot><Label>反向选择</Label></SmallRow>
            </SmallColumn>
          </GroupBody>
          <GroupLabelRow $sep $pr={7}>选择</GroupLabelRow>
        </Group>
      </Ribbon>

      <NavBar>
        <NavButtons>
          <Arrow dir="left" />
          <NavSlot $ml={36}><Arrow dir="right" /></NavSlot>
          <NavSlot $ml={30}><Chevron dir="down" s={10} c="#8f8f8f" sw={3} /></NavSlot>
          <NavSlot $ml={23}><Arrow dir="up" /></NavSlot>
        </NavButtons>
        <Address>
          <Folder w={19} h={26} />
          <CrumbSep $w={45} $pl={5}><Chevron s={10} sw={3.4} /></CrumbSep>
          <CrumbText>此电脑</CrumbText>
          <CrumbSep $w={38}><Chevron s={10} sw={3.4} /></CrumbSep>
          <CrumbText>新加卷 <L>(D:)</L></CrumbText>
          <CrumbSep $w={42}><Chevron s={10} sw={3.4} /></CrumbSep>
          <CrumbText><L>Android</L></CrumbText>
          <CrumbSep $w={39}><Chevron s={10} sw={3.4} /></CrumbSep>
          <CrumbText><L>SDK</L></CrumbText>
          <AddressEnd>
            <AddressDrop><Chevron dir="down" s={14} sw={3.4} /></AddressDrop>
            <Refresh><RefreshIcon /></Refresh>
          </AddressEnd>
        </Address>
        <Search><Magnifier /><SearchText>搜索<L>"SDK"</L></SearchText></Search>
      </NavBar>

      <Content>
        <NavPane>
          <Tree>
            {tree.map(r => (
              <TreeRow key={r.id} $pl={r.pl} $sel={r.sel}>
                <TreeIcon $w={r.w}>{r.icon}</TreeIcon>
                <Label>{r.t}</Label>
              </TreeRow>
            ))}
          </Tree>
          <VScroll>
            <ScrollArrow><Chevron dir="up" s={10} c="#606060" sw={3} /></ScrollArrow>
            <VGap />
            <VThumb />
            <Flex1 />
            <ScrollArrow $h={32}><Chevron dir="down" s={10} c="#606060" sw={3} /></ScrollArrow>
          </VScroll>
          <PaneDivider />
        </NavPane>
        <ListPane>
          <ListHeader>
            <HeaderCheckSlot><CheckBox /></HeaderCheckSlot>
            <HeaderName>名称</HeaderName>
            <HeaderDate>修改日期</HeaderDate>
            <SortCaret><svg width="16" height="9" viewBox="0 0 16 9"><path d="M1 8 L8 1 L15 8" fill="none" stroke="#888" strokeWidth="1.2" /></svg></SortCaret>
          </ListHeader>
          <Rows>
            {files.map(f => (
              <Row key={f.n} $sel={f.sel} $hot={f.hot}>
                <RowCheck>
                  {(f.sel || f.hot) && (
                    <CheckBox>
                      {f.sel && <svg width="18" height="14" viewBox="0 0 18 14"><path d="M1 7 L7 13 L17 1" fill="none" stroke="#333" strokeWidth="1.3" /></svg>}
                    </CheckBox>
                  )}
                </RowCheck>
                {fileIcon[f.k]}
                <RowName>{f.n}</RowName>
                <RowDate>{f.d}</RowDate>
              </Row>
            ))}
          </Rows>
          <HScroll>
            <ScrollArrow $w="34px" $h={32}><Chevron dir="left" s={8} c="#606060" sw={3.4} /></ScrollArrow>
            <HThumb />
            <Flex1 />
            <ScrollArrow $w="36px" $h={32}><Chevron s={8} c="#606060" sw={3.4} /></ScrollArrow>
          </HScroll>
        </ListPane>
      </Content>

      <StatusBar>
        <Label><L>6</L> 个项目</Label>
        <StatusSep $l={22} $r={20} />
        <Label>选中 <L>1</L> 个项目</Label><StatusGap><L>215 KB</L></StatusGap>
        <StatusSep $l={21} $r={0} />
        <ViewButtons>
          <ViewActive><DetailsIcon /></ViewActive>
          <ViewOther><PictureIcon w={28} h={21} /></ViewOther>
        </ViewButtons>
      </StatusBar>
      <EdgeStrip />
    </Window>
  );
}
